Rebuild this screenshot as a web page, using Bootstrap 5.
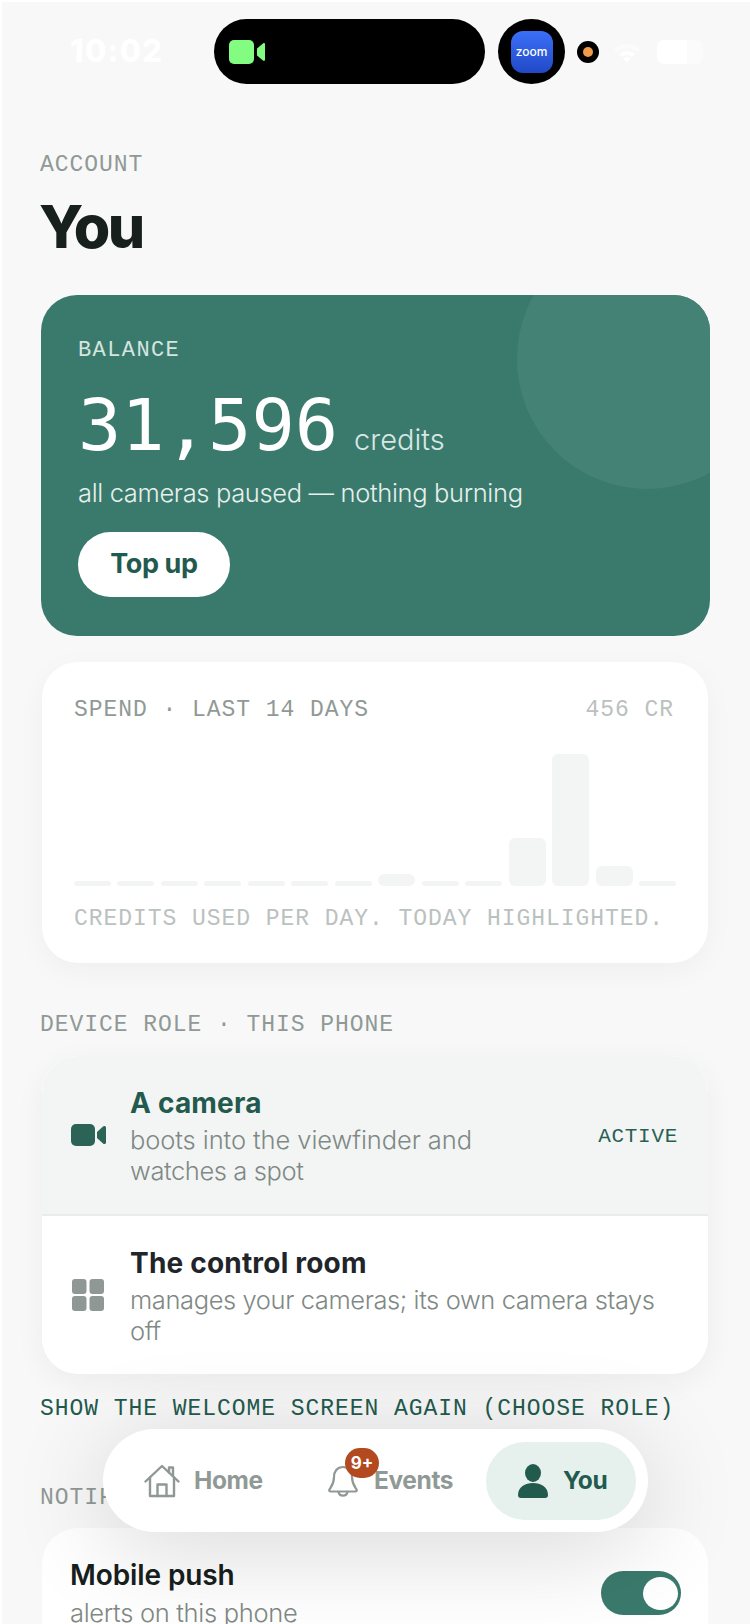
<!DOCTYPE html>
<html lang="en">
<head>
<meta charset="utf-8">
<title>You</title>
<link href="https://cdn.jsdelivr.net/npm/bootstrap@5.3.0/dist/css/bootstrap.min.css" rel="stylesheet">
<style>
html,body{height:1624px;overflow:hidden;background:#fff}
body{font-family:"Inter","Noto Sans",sans-serif;color:#17201d}
.shell{margin:2px 0 0 2px;height:1622px;background:#f8f8f8;position:relative;overflow:hidden}
.mono{font-family:"Liberation Mono",monospace;font-size:23px;letter-spacing:.95px;line-height:26px;text-transform:uppercase}
.statusline{height:65px;margin-top:17px;position:relative}
.clock{width:92px;margin-left:68px;color:#fff;font-weight:800;font-size:31px;margin-right:52px;letter-spacing:1.2px}
.island{width:271px;height:65px;background:#000;border-radius:33px;padding-left:15px}
.zoomhole{width:67px;height:65px;background:#000;border-radius:50%;margin-left:13px}
.zoomapp{width:42px;height:42px;border-radius:12px;background:linear-gradient(#3b6ff8,#2149c6);color:#fff;font-size:12px;font-weight:500}
.orangehole{width:22px;height:22px;border-radius:50%;background:#000;margin-left:12px}
.orangehole i{display:block;width:10px;height:10px;border-radius:50%;background:#f09a4a}
.batt{width:46px;height:24px;border-radius:7px;margin-left:16px;background:linear-gradient(90deg,#fff 65%,#fbfbfb 65%)}
.wifi{margin-left:14px}
.eyebrow{color:#909995;margin:68px 0 0 38px}
.pagetitle{font-size:59px;font-weight:800;letter-spacing:-2.4px;line-height:64px;margin:17px 0 0 37px;color:#17201d}
.balance{margin:36px 40px 0 39px;height:341px;background:#3a7a6c;border-radius:36px;overflow:hidden;position:relative;border:0;padding:43px 38px 0 37px;color:#fff}
.balance::before{content:"";position:absolute;width:260px;height:260px;border-radius:50%;background:#458276;top:-66px;right:-67px}
.balance>*{position:relative}
.ballabel{color:#d5e5e0;font-size:22px;letter-spacing:1.4px}
.bignum{font-family:"DejaVu Sans Mono",monospace;font-size:72px;line-height:70px;letter-spacing:0;margin-top:26px}
.unit{font-family:"Inter",sans-serif;font-size:29px;font-weight:300;color:#d8e7e3;margin-left:16px;letter-spacing:0}
.balsub{font-size:25.5px;font-weight:300;line-height:32px;margin-top:2px;color:#e6f0ed;letter-spacing:-.35px}
.topup{margin-top:23px;width:152px;height:65px;border-radius:33px;background:#fff;color:#235a4e;font-weight:700;font-size:27px;border:0;padding:0;letter-spacing:-.4px}
.spend{margin:26px 42px 0 40px;height:301px;border-radius:36px;border:0;background:#fff;padding:35px 32px 0;box-shadow:0 8px 30px rgba(0,0,0,.04)}
.muted1{color:#909995}.muted2{color:#bac1be}
.endtrim{margin-right:2px}
.chart{height:146px;margin-top:17px;gap:6.5px}
.chart span{flex:1 1 0;background:#f3f5f4;border-radius:6px;display:block}
.chart .h4px{height:5px;border-radius:3px}
.captionline{margin-top:20px}
.rolelabel{color:#909995;margin:49px 0 0 38px}
.roles{margin:18px 42px 0 40px;border-radius:36px;overflow:hidden;border:0;background:#fff;box-shadow:0 8px 30px rgba(0,0,0,.05)}
.roles .list-group-item{border:0;padding:0 30px 0 29px;background:#fff}
.roles .r1{height:160px;background:#f3f5f4;border-bottom:2px solid #e8ecea}
.roles .r2{height:158px}
.ricon{width:35px;margin-right:24px;flex:none}
.gridico{margin-left:.5px}
.rtext{padding-top:1px}
.rtitle{font-size:28px;font-weight:700;line-height:34px;letter-spacing:.2px}
.rdesc{font-size:25.5px;font-weight:300;line-height:31px;color:#7f8985;margin-top:4px;letter-spacing:-.4px}
.rdesc .roomy{letter-spacing:-.08px}
.accent{color:#235a4e}
.activetag{font-size:21px;letter-spacing:.7px;margin-left:auto;align-self:center;margin-top:3px;color:#2a6053}
.showlink{color:#235a4e;margin:22px 0 0 38px}
.notilabel{color:#909995;margin:63px 0 0 38px}
.push{margin:17px 42px 0 40px;height:200px;border-radius:36px;border:0;background:#fff;padding:29px 27px 0 28px}
.ptitle{font-size:28px;font-weight:600;line-height:36px;letter-spacing:-.1px}
.push .rdesc{letter-spacing:-.3px}
.tog{width:80px;height:44px;border-radius:22px;background:#3a7a6c;margin-top:14px;padding-right:3px}
.tog i{display:block;width:35px;height:33px;border-radius:50%;background:#fff}
.floater{position:absolute;left:101px;top:1427px;width:545px;height:103px;border-radius:52px;background:#fff;box-shadow:0 16px 100px rgba(0,0,0,.16);padding:0 12px 0 41px}
.tabx{font-size:24.5px;font-weight:700;color:#909995;letter-spacing:-.4px;position:relative}
.tabx svg{flex:none}
.tabhome{width:184px;gap:14px}
.tabev{width:158px;gap:16px}
.tabyou{width:150px;height:78px;border-radius:39px;background:#e6f0ed;color:#235a4e;padding-left:31px;gap:14px}
.pinbadge{position:absolute;left:17px;top:-14px;width:34px;height:30px;border-radius:15px;background:#b34a1f;color:#fff;font-size:17px;font-weight:700;padding:0;line-height:30px;letter-spacing:0}
</style>
</head>
<body>
<div class="shell">
  <div class="statusline d-flex align-items-center">
    <div class="clock">10:02</div>
    <div class="island d-flex align-items-center">
      <svg width="36" height="24" viewBox="0 0 36 24"><rect x="0" y="0" width="25" height="24" rx="5" fill="#82fd82"/><path d="M28 8.5 34 3.5c1-.8 2-.4 2 1v15c0 1.4-1 1.800-2 1L28 15.500z" fill="#82fd82"/></svg>
    </div>
    <div class="zoomhole d-flex align-items-center justify-content-center"><div class="zoomapp d-flex align-items-center justify-content-center">zoom</div></div>
    <div class="orangehole d-flex align-items-center justify-content-center"><i></i></div>
    <svg class="wifi" width="28" height="22" viewBox="0 0 28 22"><path d="M1 8a19 19 0 0 1 26 0l-3 3a15 15 0 0 0-20 0z" fill="#fbfbfb"/><path d="M6 13a12 12 0 0 1 16 0l-3 3a8 8 0 0 0-10 0z" fill="#fff"/><path d="M10.500 17.500a5 5 0 0 1 7 0L14 21.500z" fill="#fff"/></svg>
    <div class="batt"></div>
  </div>

  <div class="mono eyebrow">Account</div>
  <h1 class="pagetitle">You</h1>

  <div class="card balance">
    <div class="mono ballabel">Balance</div>
    <div class="bignum">31,596<span class="unit">credits</span></div>
    <div class="balsub">all cameras paused — nothing burning</div>
    <div><button type="button" class="btn topup">Top up</button></div>
  </div>

  <div class="card spend">
    <div class="d-flex justify-content-between">
      <span class="mono muted1">Spend · last 14 days</span>
      <span class="mono muted2 endtrim">456 cr</span>
    </div>
    <div class="chart d-flex align-items-end">
      <span class="h4px"></span><span class="h4px"></span><span class="h4px"></span><span class="h4px"></span><span class="h4px"></span><span class="h4px"></span><span class="h4px"></span>
      <span style="height:12px"></span>
      <span class="h4px"></span><span class="h4px"></span>
      <span style="height:48px"></span>
      <span style="height:132px"></span>
      <span style="height:20px"></span>
      <span class="h4px"></span>
    </div>
    <div class="mono muted2 captionline">Credits used per day. Today highlighted.</div>
  </div>

  <div class="mono rolelabel">Device role · this phone</div>
  <div class="list-group roles">
    <div class="list-group-item r1 d-flex align-items-center">
      <div class="ricon"><svg width="35" height="22" viewBox="0 0 35 22" class="d-block"><rect x="0" y="0" width="24" height="22" rx="5" fill="#2b6456"/><path d="M26 8 32 2.500c1.200-1 3-.5 3 1v15c0 1.500-1.800 2-3 1L26 14z" fill="#2b6456"/></svg></div>
      <div class="rtext">
        <div class="rtitle accent">A camera</div>
        <div class="rdesc"><span class="roomy">boots into the viewfinder and</span><br>watches a spot</div>
      </div>
      <div class="mono activetag">Active</div>
    </div>
    <div class="list-group-item r2 d-flex align-items-center">
      <div class="ricon"><svg width="32" height="32" viewBox="0 0 32 32" class="d-block gridico"><rect x="0" y="0" width="14.500" height="15" rx="3" fill="#8f9894"/><rect x="17.500" y="0" width="14.500" height="15" rx="3" fill="#8f9894"/><rect x="0" y="17" width="14.500" height="15" rx="3" fill="#8f9894"/><rect x="17.500" y="17" width="14.500" height="15" rx="3" fill="#8f9894"/></svg></div>
      <div class="rtext">
        <div class="rtitle">The control room</div>
        <div class="rdesc">manages your cameras; its own camera stays<br>off</div>
      </div>
    </div>
  </div>
  <div class="mono showlink">Show the welcome screen again (choose role)</div>

  <div class="mono notilabel">Notifications</div>
  <div class="card push">
    <div class="d-flex justify-content-between">
      <div>
        <div class="ptitle">Mobile push</div>
        <div class="rdesc">alerts on this phone</div>
      </div>
      <div class="tog d-flex align-items-center justify-content-end"><i></i></div>
    </div>
  </div>

  <nav class="floater d-flex align-items-center">
    <div class="tabx tabhome d-flex align-items-center">
      <svg width="36" height="34" viewBox="0 0 36 34" fill="none" stroke="#8f9894" stroke-width="2.400" stroke-linejoin="round" stroke-linecap="round"><path d="M1.500 17.500 18 2l16.500 15.500"/><path d="M25 8.500V3.500h4v8.500"/><path d="M6 13.500V32h24V13.500"/><path d="M13.500 32V20.500h9V32"/></svg>
      <span>Home</span>
    </div>
    <div class="tabx tabev d-flex align-items-center">
      <svg width="30" height="34" viewBox="0 0 30 34" fill="none" stroke="#8f9894" stroke-width="2.200" stroke-linejoin="round" stroke-linecap="round"><path d="M15 3c-6 0-9 4.500-9 10 0 7-3 10-4.500 12.500-.7 1.200 0 2 1.200 2h24.600c1.200 0 1.900-.8 1.200-2C27 23 24 20 24 13c0-5.500-3-10-9-10z"/><path d="M10.500 28a4.600 4.600 0 0 0 9 0"/></svg>
      <span>Events</span>
      <span class="badge pinbadge">9+</span>
    </div>
    <div class="tabx tabyou d-flex align-items-center">
      <svg width="32" height="34" viewBox="0 0 32 34"><ellipse cx="16" cy="9" rx="8" ry="9" fill="#235a4e"/><path d="M1 31c0-8 7-12 15-12s15 4 15 12c0 2-1 3-3 3H4c-2 0-3-1-3-3z" fill="#235a4e"/></svg>
      <span>You</span>
    </div>
  </nav>
</div>
<script src="https://cdn.jsdelivr.net/npm/bootstrap@5.3.0/dist/js/bootstrap.bundle.min.js"></script>
</body>
</html>
